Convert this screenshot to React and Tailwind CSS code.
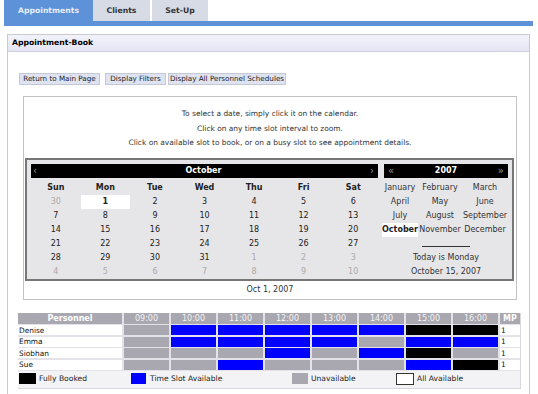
const weeks = [
    [30, 1, 2, 3, 4, 5, 6],
    [7, 8, 9, 10, 11, 12, 13],
    [14, 15, 16, 17, 18, 19, 20],
    [21, 22, 23, 24, 25, 26, 27],
    [28, 29, 30, 31, 1, 2, 3],
    [4, 5, 6, 7, 8, 9, 10],
];

const dayNames = ['Sun', 'Mon', 'Tue', 'Wed', 'Thu', 'Fri', 'Sat'];

const months = [
    'January', 'February', 'March',
    'April', 'May', 'June',
    'July', 'August', 'September',
    'October', 'November', 'December',
];

const hours = ['09:00', '10:00', '11:00', '12:00', '13:00', '14:00', '15:00', '16:00'];

// u = unavailable, a = available, b = fully booked
const schedule = [
    { name: 'Denise', slots: ['u', 'a', 'a', 'a', 'a', 'a', 'b', 'b'] },
    { name: 'Emma', slots: ['u', 'a', 'a', 'a', 'a', 'u', 'a', 'a'] },
    { name: 'Siobhan', slots: ['u', 'u', 'u', 'a', 'u', 'a', 'b', 'u'] },
    { name: 'Sue', slots: ['u', 'u', 'a', 'u', 'u', 'u', 'a', 'b'] },
];

const slotColor = {
    u: 'bg-[#a9a7af]',
    a: 'bg-[#0000ff]',
    b: 'bg-black',
};

const isOtherMonth = (row, col) => (row === 0 && col === 0) || (row === 4 && col >= 4) || row === 5;

const App = () => {
    return (
        <div className="w-[538px] h-[394px] overflow-hidden bg-white text-[#222]" style={{ fontFamily: '"DejaVu Sans", Tahoma, sans-serif' }}>
            {/* Tabs */}
            <div className="flex h-[21px] pl-[4px]">
                <div className="w-[89px] flex items-center justify-center bg-[#5d92d8] text-[#e6eefa] text-[7.7px] font-bold">
                    Appointments
                </div>
                <div className="w-[57px] flex items-center justify-center bg-[#d7dbe6] text-[#333] text-[7.7px] font-bold">
                    Clients
                </div>
                <div className="w-[56px] ml-[2px] flex items-center justify-center bg-[#d7dbe6] text-[#333] text-[7.7px] font-bold">
                    Set-Up
                </div>
            </div>
            <div className="ml-[4px] w-[529px] h-[5px] bg-[#5d92d8]" />

            {/* Appointment-Book panel */}
            <div className="mt-[8px] ml-[7px] w-[523px] h-[370px] border border-[#c9c9d2]">
                <div className="h-[17px] flex items-center px-[4px] bg-gradient-to-b from-[#f3f3fb] to-[#e4e5f4] border-b border-[#d0d0da] text-[7.7px] font-bold text-black">
                    Appointment-Book
                </div>

                {/* Buttons */}
                <div className="flex mt-[21px] ml-[11px] h-[12px] text-[7.2px]">
                    <button className="w-[81px] bg-[#dfe3f0] border border-[#c4c9d8] text-[#222]">Return to Main Page</button>
                    <button className="w-[61px] ml-[5px] bg-[#dfe3f0] border border-[#c4c9d8] text-[#222]">Display Filters</button>
                    <button className="w-[118px] ml-[2px] bg-[#dfe3f0] border border-[#c4c9d8] text-[#222]">Display All Personnel Schedules</button>
                </div>

                {/* Calendar box */}
                <div className="mt-[11px] ml-[15px] w-[494px] border border-[#c2c2c2] bg-white">
                    <div className="h-[61px] pt-[10px] text-center text-[7.45px] leading-[14.5px] text-[#333]">
                        <div>To select a date, simply click it on the calendar.</div>
                        <div>Click on any time slot interval to zoom.</div>
                        <div>Click on available slot to book, or on a busy slot to see appointment details.</div>
                    </div>

                    <div className="ml-[1px] w-[489px] h-[123px] border-2 border-[#777] bg-[#e6e6e8] flex pt-[4px] pl-[4px] text-[8px]">
                        {/* Month */}
                        <div className="w-[347px]">
                            <div className="h-[14px] bg-black flex items-center justify-between pl-[2px] pr-[4px] text-white">
                                <span className="text-[#999] text-[10px] leading-none">‹</span>
                                <span className="font-bold">October</span>
                                <span className="text-[#999] text-[10px] leading-none">›</span>
                            </div>
                            <div className="grid grid-cols-7 mt-[3px]">
                                {dayNames.map((d) => (
                                    <div key={d} className="h-[14px] flex items-center justify-center font-bold text-[#222]">
                                        {d}
                                    </div>
                                ))}
                                {weeks.map((week, r) =>
                                    week.map((day, c) => (
                                        <div
                                            key={`${r}-${c}`}
                                            className={`h-[14px] flex items-center justify-center ${
                                                isOtherMonth(r, c) ? 'text-[#aaa]' : 'text-[#222]'
                                            } ${r === 0 && c === 1 ? 'bg-white font-bold' : ''}`}
                                        >
                                            {day}
                                        </div>
                                    ))
                                )}
                            </div>
                        </div>

                        {/* Year */}
                        <div className="w-[126px] ml-[4px]">
                            <div className="h-[14px] ml-[2px] bg-black flex items-center justify-between px-[4px] text-white">
                                <span className="text-[#999] text-[10px] leading-none">«</span>
                                <span className="font-bold">2007</span>
                                <span className="text-[#999] text-[10px] leading-none">»</span>
                            </div>
                            <div className="grid grid-cols-[36px_44px_46px] mt-[3px]">
                                {months.map((m) => (
                                    <div
                                        key={m}
                                        className={`h-[14px] flex items-center justify-center ${
                                            m === 'October' ? 'bg-white font-bold text-[#222]' : 'text-[#333]'
                                        }`}
                                    >
                                        {m}
                                    </div>
                                ))}
                            </div>
                            <div className="h-[14px] flex items-end justify-center pb-[4px] pl-[2px]">
                                <div className="w-[48px] h-px bg-[#333]" />
                            </div>
                            <div className="h-[14px] flex items-center justify-center pl-[2px] text-[#333]">Today is Monday</div>
                            <div className="h-[14px] flex items-center justify-center pl-[2px] text-[#333]">October 15, 2007</div>
                        </div>
                    </div>

                    <div className="h-[18px] flex items-center justify-center text-[8px] text-[#333]">Oct 1, 2007</div>
                </div>

                {/* Personnel schedule */}
                <div className="mt-[13px] ml-[10px] w-[503px] bg-[#e2e2e8] border-r border-b border-[#d6d6dc]">
                    <div className="grid grid-cols-[104px_repeat(8,45px)_20px] gap-x-[2px] gap-y-[1.4px]">
                        <div className="h-[11px] bg-[#a9a7af] flex items-center justify-center text-white text-[8px] font-bold">Personnel</div>
                        {hours.map((h) => (
                            <div key={h} className="h-[11px] bg-[#a9a7af] flex items-center justify-center text-[#f4f4f4] text-[8px]">
                                {h}
                            </div>
                        ))}
                        <div className="h-[11px] bg-[#a9a7af] flex items-center justify-center text-white text-[8px] font-bold">MP</div>

                        {schedule.map((person) => (
                            <div key={person.name} className="contents">
                                <div className="h-[10px] bg-white flex items-center pl-[1px] text-[7.4px] text-[#111]">{person.name}</div>
                                {person.slots.map((s, i) => (
                                    <div key={i} className={`h-[10px] ${slotColor[s]}`} />
                                ))}
                                <div className="h-[10px] bg-white flex items-center pl-[1px] text-[7.4px] text-[#111]">1</div>
                            </div>
                        ))}
                    </div>

                    {/* Legend */}
                    <div className="flex items-center h-[17px] mt-[1px] bg-[#f3f3f5] pl-[1px] pb-[1px] text-[7.6px] text-[#222]">
                        <div className="w-[112px] flex items-center">
                            <div className="w-[17px] h-[11px] bg-black" />
                            <span className="ml-[3px]">Fully Booked</span>
                        </div>
                        <div className="w-[161px] flex items-center">
                            <div className="w-[15px] h-[11px] bg-[#0000ff]" />
                            <span className="ml-[4px]">Time Slot Available</span>
                        </div>
                        <div className="w-[104px] flex items-center">
                            <div className="w-[16px] h-[11px] bg-[#a9a7af]" />
                            <span className="ml-[3px]">Unavailable</span>
                        </div>
                        <div className="flex items-center">
                            <div className="w-[18px] h-[12px] bg-white border border-[#333]" />
                            <span className="ml-[3px]">All Available</span>
                        </div>
                    </div>
                </div>
            </div>
        </div>
    );
};

export default App;
